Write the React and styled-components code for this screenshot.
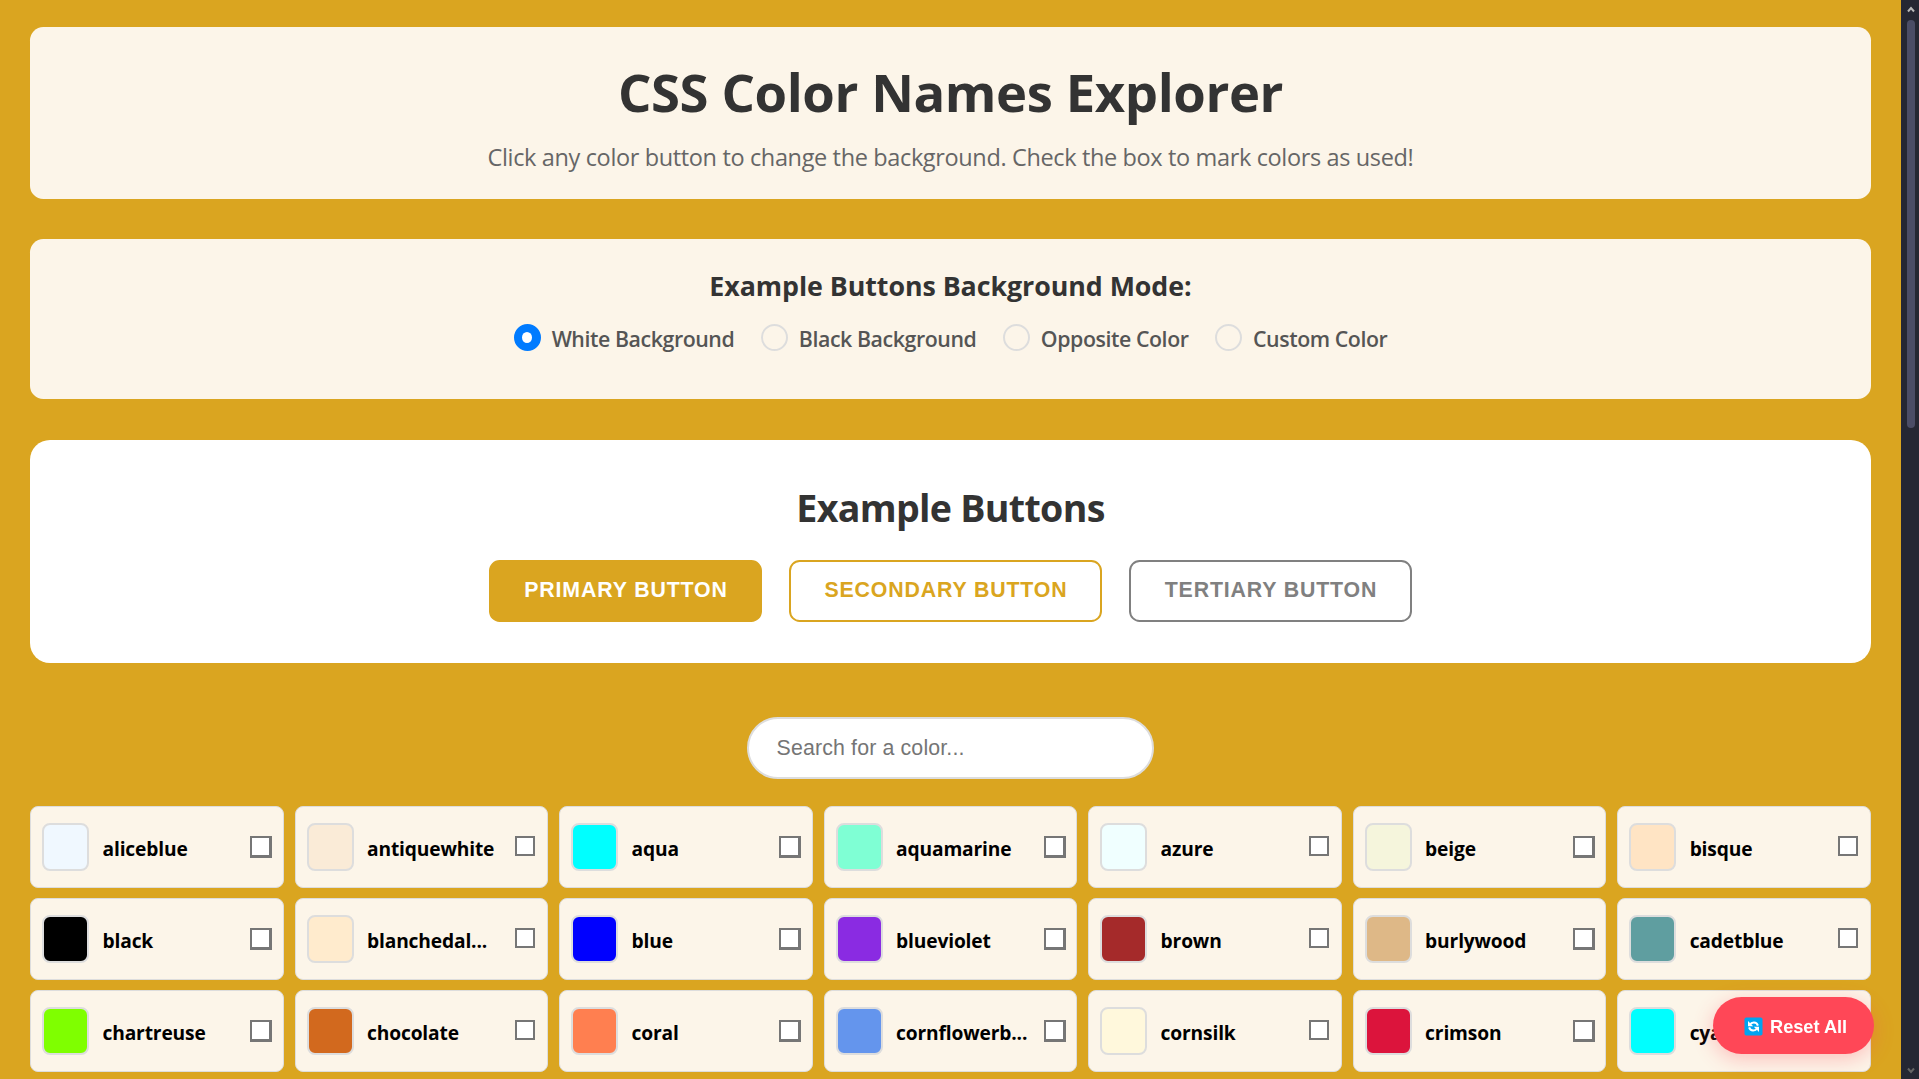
import React, { useState } from 'react';
import styled, { createGlobalStyle } from 'styled-components';

const UI = '"Open Sans", "Noto Sans", sans-serif';
const ARIAL = '"Liberation Sans", Arial, sans-serif';

const Global = createGlobalStyle`
  *, *::before, *::after { box-sizing: border-box; }
  body { margin: 0; background: goldenrod; font-family: ${UI}; }
  h1, h2, h3, p { margin: 0; }
`;

const Screen = styled.div`
  display: flex;
  height: 1079px;
  overflow: hidden;
  background: #daa520;
`;
const Page = styled.main`
  flex: 1;
  min-width: 0;
  display: flex;
  flex-direction: column;
  align-items: stretch;
  padding: 27px 30px 0;
`;
const Panel = styled.section`
  flex: none;
  display: flex;
  flex-direction: column;
  align-items: center;
  border-radius: 13.33px;
  background: #fcf5e9;
`;
const Header = styled(Panel)`
  height: 172px;
  padding-top: 29px;
`;
const Title = styled.h1`
  font-size: 52.6px;
  line-height: 72px;
  font-weight: 700;
  letter-spacing: -0.41px;
  color: #333;
`;
const Subtitle = styled.p`
  margin-top: 13px;
  font-size: 23.5px;
  line-height: 32px;
  letter-spacing: -0.36px;
  color: #666;
`;
const ModePanel = styled(Panel)`
  height: 160px;
  margin-top: 40px;
  padding-top: 28px;
`;
const ModeTitle = styled.h3`
  font-size: 26.8px;
  line-height: 38px;
  font-weight: 700;
  letter-spacing: -0.06px;
  color: #333;
`;
const Options = styled.div`
  display: flex;
  gap: 26.5px;
  margin-top: 18px;
`;
const Option = styled.label`
  display: flex;
  align-items: center;
  gap: 11px;
  height: 28px;
  font-size: 21.33px;
  font-weight: 560;
  letter-spacing: -0.43px;
  white-space: nowrap;
  color: #555;
`;
const OptionText = styled.span`
  padding-top: 2px;
`;
const Radio = styled.span`
  display: flex;
  align-items: center;
  justify-content: center;
  width: 27px;
  height: 27px;
  border-radius: 50%;
  border: 2px solid ${(p) => (p.$on ? '#007bff' : '#ddd')};
  background: ${(p) => (p.$on ? '#007bff' : 'transparent')};
  &::after {
    content: '';
    display: ${(p) => (p.$on ? 'block' : 'none')};
    width: 10px;
    height: 11px;
    border-radius: 50%;
    background: #fff;
  }
`;
const Demo = styled(Panel)`
  height: 223px;
  margin-top: 41px;
  padding-top: 41px;
  border-radius: 20px;
  background: #fff;
`;
const DemoTitle = styled.h2`
  font-size: 37.6px;
  line-height: 54px;
  font-weight: 700;
  letter-spacing: -0.7px;
  color: #333;
`;
const ButtonRow = styled.div`
  display: flex;
  gap: 27px;
  margin-top: 25px;
`;
const DemoButton = styled.button`
  width: ${(p) => p.$w}px;
  height: 62px;
  padding: 0 0 2px 1px;
  border: 2px solid ${(p) => p.$line};
  border-radius: 10.67px;
  background: ${(p) => p.$fill};
  color: ${(p) => p.$ink};
  font: 700 21.33px/24px ${ARIAL};
  letter-spacing: 0.85px;
`;
const Search = styled.input`
  flex: none;
  align-self: center;
  width: 407px;
  height: 62px;
  margin-top: 54px;
  padding: 0 27.5px;
  border: 2px solid #ddd;
  border-radius: 33px;
  background: #fff;
  font: 400 21.33px ${ARIAL};
  letter-spacing: 0.15px;
  outline: none;
  &::placeholder { color: #757575; opacity: 1; }
`;
const Grid = styled.div`
  display: grid;
  grid-template-columns: repeat(7, minmax(0, 1fr));
  grid-auto-rows: 82px;
  gap: 10px 10.67px;
  margin-top: 27px;
`;
const Card = styled.div`
  display: flex;
  align-items: center;
  padding: 0 10px 0 11px;
  border: 1px solid #ddd;
  border-radius: 8px;
  background: #fcf5e9;
`;
const Swatch = styled.span`
  flex: none;
  width: 47px;
  height: 48px;
  border: 2px solid #ddd;
  border-radius: 8px;
  background: ${(p) => p.$c};
`;
const Name = styled.span`
  flex: 1;
  min-width: 0;
  margin-left: 13.5px;
  padding-top: 2px;
  overflow: hidden;
  white-space: nowrap;
  font-size: 19.2px;
  font-weight: 700;
  letter-spacing: -0.15px;
  color: #000;
`;
const Tick = styled.span`
  flex: none;
  width: 22px;
  height: 22px;
  margin-right: ${(p) => (p.$inset ? 1 : 0)}px;
  display: flex;
  &::before {
    content: '';
    width: ${(p) => (p.$big ? 22 : 20)}px;
    height: ${(p) => (p.$big ? 22 : 20)}px;
    border-style: solid;
    border-color: #767676;
    border-width: ${(p) => (p.$big ? '2px 3px 3px 2px' : '2px')};
    background: #fff;
  }
`;
const Reset = styled.button`
  position: fixed;
  right: 45px;
  bottom: 25px;
  width: 161px;
  height: 57px;
  display: flex;
  align-items: center;
  padding: 1px 0 0 31px;
  gap: 7px;
  border: 0;
  border-radius: 33px;
  background: #ff4757;
  box-shadow: 0 5px 20px rgba(255, 71, 87, 0.3);
  color: #fff;
  font: 700 18.2px ${ARIAL};
  white-space: nowrap;
`;
const ResetText = styled.span`
  padding-top: 2px;
`;
const Rail = styled.aside`
  flex: none;
  width: 18px;
  display: flex;
  flex-direction: column;
  align-items: center;
  padding: 6px 0 5px 2px;
  background: #252733;
`;
const Thumb = styled.div`
  width: 8px;
  height: 408px;
  margin: 7px 0 auto;
  border-radius: 4px;
  background: #4b4d66;
`;

const MODES = ['White Background', 'Black Background', 'Opposite Color', 'Custom Color'];
const COLORS = [
  'aliceblue', 'antiquewhite', 'aqua', 'aquamarine', 'azure', 'beige', 'bisque',
  'black', 'blanchedalmond', 'blue', 'blueviolet', 'brown', 'burlywood', 'cadetblue',
  'chartreuse', 'chocolate', 'coral', 'cornflowerblue', 'cornsilk', 'crimson', 'cyan',
];
const SHORT = { blanchedalmond: 'blanchedal...', cornflowerblue: 'cornflowerb...' };

const Chevron = ({ d, color }) => (
  <svg width="8" height="7" viewBox="0 0 8 7">
    <path d={d} fill="none" stroke={color} strokeWidth="2" />
  </svg>
);

const ResetIcon = () => (
  <svg width="19" height="19" viewBox="0 0 19 19">
    <rect x="0.5" y="0.5" width="18" height="18" rx="1.8" fill="#00a4ef" />
    <path d="M6 7.6C7.4 5 12.6 4.4 13.9 8.6M13 11.4C11.6 14 6.4 14.6 5.1 10.4" fill="none" stroke="#fff" strokeWidth="2" />
    <path d="M4 4v5.2h5.2zM15 15V9.800H9.800z" fill="#fff" />
  </svg>
);

export default function App() {
  const [mode, setMode] = useState(0);
  return (
    <>
      <Global />
      <Screen>
        <Page>
          <Header>
            <Title>CSS Color Names Explorer</Title>
            <Subtitle>Click any color button to change the background. Check the box to mark colors as used!</Subtitle>
          </Header>
          <ModePanel>
            <ModeTitle>Example Buttons Background Mode:</ModeTitle>
            <Options>
              {MODES.map((text, i) => (
                <Option key={text} onClick={() => setMode(i)}>
                  <Radio $on={i === mode} />
                  <OptionText>{text}</OptionText>
                </Option>
              ))}
            </Options>
          </ModePanel>
          <Demo>
            <DemoTitle>Example Buttons</DemoTitle>
            <ButtonRow>
              <DemoButton $w={273} $fill="#daa520" $line="#daa520" $ink="#fff">PRIMARY BUTTON</DemoButton>
              <DemoButton $w={313} $fill="#fff" $line="#daa520" $ink="#daa520">SECONDARY BUTTON</DemoButton>
              <DemoButton $w={283} $fill="#fff" $line="#808080" $ink="#808080">TERTIARY BUTTON</DemoButton>
            </ButtonRow>
          </Demo>
          <Search placeholder="Search for a color..." />
          <Grid>
            {COLORS.map((c, i) => (
              <Card key={c}>
                <Swatch $c={c} />
                <Name>{SHORT[c] || c}</Name>
                <Tick $big={[0, 2, 3, 5].includes(i % 7)} $inset={[0, 2].includes(i % 7)} />
              </Card>
            ))}
          </Grid>
        </Page>
        <Rail>
          <Chevron d="M1 5.5 4 2l3 3.5" color="#b8b8b8" />
          <Thumb />
          <Chevron d="M1 1.5 4 5l3-3.5" color="#666" />
        </Rail>
      </Screen>
      <Reset>
        <ResetIcon />
        <ResetText>Reset All</ResetText>
      </Reset>
    </>
  );
}
